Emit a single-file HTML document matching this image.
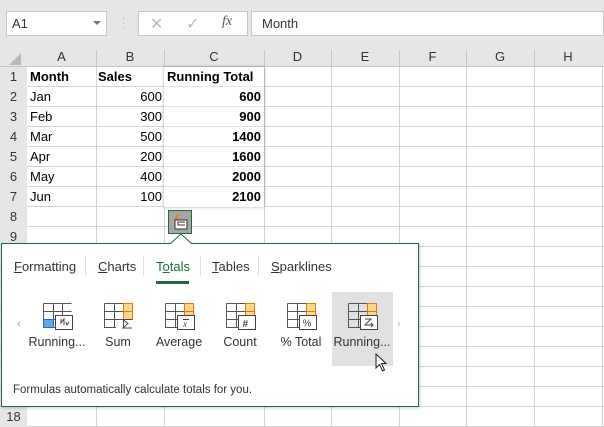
<!DOCTYPE html>
<html><head><style>
*{margin:0;padding:0;box-sizing:border-box}
body{width:604px;height:427px;overflow:hidden;background:#fff;font-family:"Liberation Sans",sans-serif;font-size:13px;color:#222;position:relative}
.a{position:absolute}
.v{position:absolute;width:1px;background:#d4d4d4}
.h{position:absolute;height:1px;background:#d4d4d4}
.ch{position:absolute;top:47px;height:20px;line-height:20px;text-align:center;color:#333;font-size:13px}
.rh{position:absolute;left:0;width:27px;height:20px;line-height:20px;text-align:center;color:#333;background:#e6e6e6;font-size:13px}
.c{position:absolute;height:20px;line-height:20px;font-size:13px;color:#000}
.tab{position:absolute;top:259px;font-size:13px;color:#333}
.sep{position:absolute;top:256px;width:1px;height:20px;background:#ddd}
.lbl{position:absolute;top:335px;font-size:12.5px;color:#333;text-align:center;width:70px}
</style></head><body>
<!-- top bar -->
<div class="a" style="left:0;top:0;width:604px;height:47px;background:#e6e6e6"></div>
<div class="a" style="left:6px;top:11px;width:101px;height:25px;background:#fff;border:1px solid #c6c6c6"></div>
<div class="a" style="left:12px;top:16px;font-size:13px;color:#333">A1</div>
<div class="a" style="left:93px;top:21px;width:0;height:0;border-left:4px solid transparent;border-right:4px solid transparent;border-top:4px solid #777"></div>
<div class="a" style="left:122px;top:16px;color:#aaa;font-size:10px;line-height:5px">·<br>·<br>·</div>
<div class="a" style="left:138px;top:11px;width:110px;height:25px;background:#fff;border:1px solid #c6c6c6"></div>
<div class="a" style="left:150px;top:14px;color:#bbb;font-size:16px">✕</div>
<div class="a" style="left:186px;top:14px;color:#bbb;font-size:16px">✓</div>
<div class="a" style="left:222px;top:14px;color:#555;font-size:14px;font-style:italic;font-family:'Liberation Serif',serif">fx</div>
<div class="a" style="left:251px;top:11px;width:353px;height:25px;background:#fff;border:1px solid #c6c6c6"></div>
<div class="a" style="left:262px;top:16px;font-size:13px;color:#333">Month</div>
<!-- column header -->
<div class="a" style="left:0;top:47px;width:604px;height:20px;background:#e6e6e6;border-bottom:1px solid #c6c6c6"></div>
<div class="a" style="left:9px;top:53px;width:0;height:0;border-left:12px solid transparent;border-bottom:12px solid #b9b9b9"></div>
<div class="a" style="left:0;top:67px;width:27px;height:360px;background:#e6e6e6;border-right:1px solid #c6c6c6"></div>
<div class="ch" style="left:27px;width:69px">A</div>
<div class="ch" style="left:96px;width:68px">B</div>
<div class="ch" style="left:164px;width:100px">C</div>
<div class="ch" style="left:264px;width:67px">D</div>
<div class="ch" style="left:331px;width:68px">E</div>
<div class="ch" style="left:399px;width:67px">F</div>
<div class="ch" style="left:466px;width:68px">G</div>
<div class="ch" style="left:534px;width:68px">H</div>
<!-- header separators -->
<div class="v" style="left:96px;top:50px;height:17px;background:#c6c6c6"></div>
<div class="v" style="left:164px;top:50px;height:17px;background:#c6c6c6"></div>
<div class="v" style="left:264px;top:50px;height:17px;background:#c6c6c6"></div>
<div class="v" style="left:331px;top:50px;height:17px;background:#c6c6c6"></div>
<div class="v" style="left:399px;top:50px;height:17px;background:#c6c6c6"></div>
<div class="v" style="left:466px;top:50px;height:17px;background:#c6c6c6"></div>
<div class="v" style="left:534px;top:50px;height:17px;background:#c6c6c6"></div>
<!-- grid lines -->
<div class="v" style="left:96px;top:67px;height:360px"></div>
<div class="v" style="left:164px;top:67px;height:360px"></div>
<div class="v" style="left:264px;top:67px;height:360px"></div>
<div class="v" style="left:331px;top:67px;height:360px"></div>
<div class="v" style="left:399px;top:67px;height:360px"></div>
<div class="v" style="left:466px;top:67px;height:360px"></div>
<div class="v" style="left:534px;top:67px;height:360px"></div>
<div class="v" style="left:602px;top:67px;height:360px"></div>
<div class="h" style="left:0;top:86px;width:604px"></div>
<div class="h" style="left:0;top:106px;width:604px"></div>
<div class="h" style="left:0;top:126px;width:604px"></div>
<div class="h" style="left:0;top:146px;width:604px"></div>
<div class="h" style="left:0;top:166px;width:604px"></div>
<div class="h" style="left:0;top:186px;width:604px"></div>
<div class="h" style="left:0;top:206px;width:604px"></div>
<div class="h" style="left:0;top:226px;width:604px"></div>
<div class="h" style="left:0;top:246px;width:604px"></div>
<div class="h" style="left:0;top:266px;width:604px"></div>
<div class="h" style="left:0;top:286px;width:604px"></div>
<div class="h" style="left:0;top:306px;width:604px"></div>
<div class="h" style="left:0;top:326px;width:604px"></div>
<div class="h" style="left:0;top:346px;width:604px"></div>
<div class="h" style="left:0;top:366px;width:604px"></div>
<div class="h" style="left:0;top:386px;width:604px"></div>
<div class="h" style="left:0;top:406px;width:604px"></div>
<div class="h" style="left:0;top:426px;width:604px"></div>
<!-- row headers -->
<div class="rh" style="top:67px">1</div><div class="rh" style="top:87px">2</div><div class="rh" style="top:107px">3</div><div class="rh" style="top:127px">4</div><div class="rh" style="top:147px">5</div><div class="rh" style="top:167px">6</div><div class="rh" style="top:187px">7</div><div class="rh" style="top:207px">8</div><div class="rh" style="top:227px">9</div><div class="rh" style="top:407px">18</div>
<!-- C shadowed column -->
<div class="a" style="left:164px;top:67px;width:100px;height:140px;background:#fff;box-shadow:0 0 3px rgba(0,0,0,.35)"></div>
<div class="h" style="left:165px;top:86px;width:98px;background:#e4e4e4"></div>
<div class="h" style="left:165px;top:106px;width:98px;background:#e4e4e4"></div>
<div class="h" style="left:165px;top:126px;width:98px;background:#e4e4e4"></div>
<div class="h" style="left:165px;top:146px;width:98px;background:#e4e4e4"></div>
<div class="h" style="left:165px;top:166px;width:98px;background:#e4e4e4"></div>
<div class="h" style="left:165px;top:186px;width:98px;background:#e4e4e4"></div>
<!-- data -->
<div class="c" style="left:30px;top:67px;font-weight:bold">Month</div>
<div class="c" style="left:98px;top:67px;font-weight:bold">Sales</div>
<div class="c" style="left:167px;top:67px;font-weight:bold">Running Total</div>
<div class="c" style="left:30px;top:87px">Jan</div><div class="c" style="left:96px;width:66px;text-align:right;top:87px">600</div><div class="c" style="left:164px;width:97px;text-align:right;top:87px;font-weight:bold">600</div>
<div class="c" style="left:30px;top:107px">Feb</div><div class="c" style="left:96px;width:66px;text-align:right;top:107px">300</div><div class="c" style="left:164px;width:97px;text-align:right;top:107px;font-weight:bold">900</div>
<div class="c" style="left:30px;top:127px">Mar</div><div class="c" style="left:96px;width:66px;text-align:right;top:127px">500</div><div class="c" style="left:164px;width:97px;text-align:right;top:127px;font-weight:bold">1400</div>
<div class="c" style="left:30px;top:147px">Apr</div><div class="c" style="left:96px;width:66px;text-align:right;top:147px">200</div><div class="c" style="left:164px;width:97px;text-align:right;top:147px;font-weight:bold">1600</div>
<div class="c" style="left:30px;top:167px">May</div><div class="c" style="left:96px;width:66px;text-align:right;top:167px">400</div><div class="c" style="left:164px;width:97px;text-align:right;top:167px;font-weight:bold">2000</div>
<div class="c" style="left:30px;top:187px">Jun</div><div class="c" style="left:96px;width:66px;text-align:right;top:187px">100</div><div class="c" style="left:164px;width:97px;text-align:right;top:187px;font-weight:bold">2100</div>
<!-- quick analysis button -->
<div class="a" style="left:168px;top:210px;width:24px;height:24px;background:#a6a6a6;border:1px solid #1e6b3e"></div>
<svg class="a" style="left:168px;top:210px" width="24" height="24"><path d="M9 4 L6 10 H9 L7 14 L12 8 H9 L11 4Z" fill="#e87b1c"/><rect x="7" y="10" width="12" height="9" fill="#fff" stroke="#333"/><path d="M17 12 H10 V15 H17" fill="none" stroke="#333"/></svg>
<!-- popup -->
<div class="a" style="left:1px;top:243px;width:418px;height:164px;background:#fff;border:1px solid #1e6b3e;box-shadow:1px 1px 3px rgba(0,0,0,.2)"></div>
<svg class="a" style="left:170px;top:233px" width="22" height="12"><path d="M0 11 L11 1 L22 11" fill="#fff" stroke="#1e6b3e"/><rect x="0" y="11" width="22" height="1" fill="#fff"/></svg>
<div class="tab" style="left:14px"><u>F</u>ormatting</div>
<div class="sep" style="left:85px"></div>
<div class="tab" style="left:98px"><u>C</u>harts</div>
<div class="sep" style="left:143px"></div>
<div class="tab" style="left:156px;color:#1e6b3e">T<u>o</u>tals</div>
<div class="a" style="left:156px;top:281px;width:33px;height:3px;background:#1e6b3e"></div>
<div class="sep" style="left:200px"></div>
<div class="tab" style="left:212px"><u>T</u>ables</div>
<div class="sep" style="left:258px"></div>
<div class="tab" style="left:271px"><u>S</u>parklines</div>
<div class="a" style="left:332px;top:292px;width:61px;height:74px;background:#e1e1e1"></div>
<div class="a" style="left:17px;top:318px;color:#999;font-size:11px">‹</div>
<div class="a" style="left:397px;top:318px;color:#bbb;font-size:11px">›</div>
<svg class="a" style="left:0;top:295px" width="420" height="40">
<defs>
<g id="g"><path d="M0.5 8.5 H28.5 M0.5 16.5 H28.5 M10.5 0.5 V24 M19.5 0.5 V24 M0.5 0.5 H28.5 M0.5 0.5 V24.5 H12" fill="none" stroke="#555"/></g>
<g id="o"><rect x="19.5" y="0.5" width="9" height="16" fill="#fcd68a" stroke="#e07a10"/><path d="M19.5 8.5 H28.5" stroke="#e07a10"/></g>
</defs>
<g transform="translate(43,8)"><use href="#g"/><rect x="0.5" y="16.5" width="10" height="8" fill="#64a7e0" stroke="#1f6fc0"/><rect x="12.5" y="12.5" width="17" height="14" fill="#fff" stroke="#444"/><path d="M18 16 V20 L21 16 V22 M23 19 L24 22 L26 19" fill="none" stroke="#444"/></g>
<g transform="translate(104,8)"><use href="#g"/><use href="#o"/><path d="M19.5 16.5 H28 M19 16.5 L24 20.5 L19 25 H28" fill="none" stroke="#444"/></g>
<g transform="translate(165,8)"><use href="#g"/><use href="#o"/><rect x="12.5" y="12.5" width="17" height="14" fill="#fff" stroke="#444"/><text x="18" y="24" font-size="9" font-style="italic" fill="#444" font-family="Liberation Serif">x</text><path d="M18 16.5 H24" stroke="#444"/></g>
<g transform="translate(226,8)"><use href="#g"/><use href="#o"/><rect x="12.5" y="12.5" width="17" height="14" fill="#fff" stroke="#444"/><text x="16.5" y="24" font-size="10" font-weight="bold" fill="#444" font-family="Liberation Sans">#</text></g>
<g transform="translate(287,8)"><use href="#g"/><use href="#o"/><rect x="12.5" y="12.5" width="17" height="14" fill="#fff" stroke="#444"/><text x="15.5" y="23.5" font-size="10" fill="#444" font-family="Liberation Sans">%</text></g>
<g transform="translate(348,8)"><use href="#g"/><use href="#o"/><rect x="12.5" y="12.5" width="17" height="14" fill="#fff" stroke="#444"/><path d="M17 16 H23 L17 22 H25 M23 20 L25 22 L23 24" fill="none" stroke="#444"/></g>
</svg>
<div class="lbl" style="left:22px">Running...</div>
<div class="lbl" style="left:83px">Sum</div>
<div class="lbl" style="left:144px">Average</div>
<div class="lbl" style="left:205px">Count</div>
<div class="lbl" style="left:266px">% Total</div>
<div class="lbl" style="left:327px">Running...</div>
<svg class="a" style="left:375px;top:353px" width="14" height="20"><path d="M1 1 V15 L4.5 11.5 L7.5 18 L9.5 17 L6.5 10.5 H11 Z" fill="#fff" stroke="#222"/></svg>
<div class="a" style="left:13px;top:384px;font-size:11.5px;color:#333">Formulas automatically calculate totals for you.</div>
</body></html>
